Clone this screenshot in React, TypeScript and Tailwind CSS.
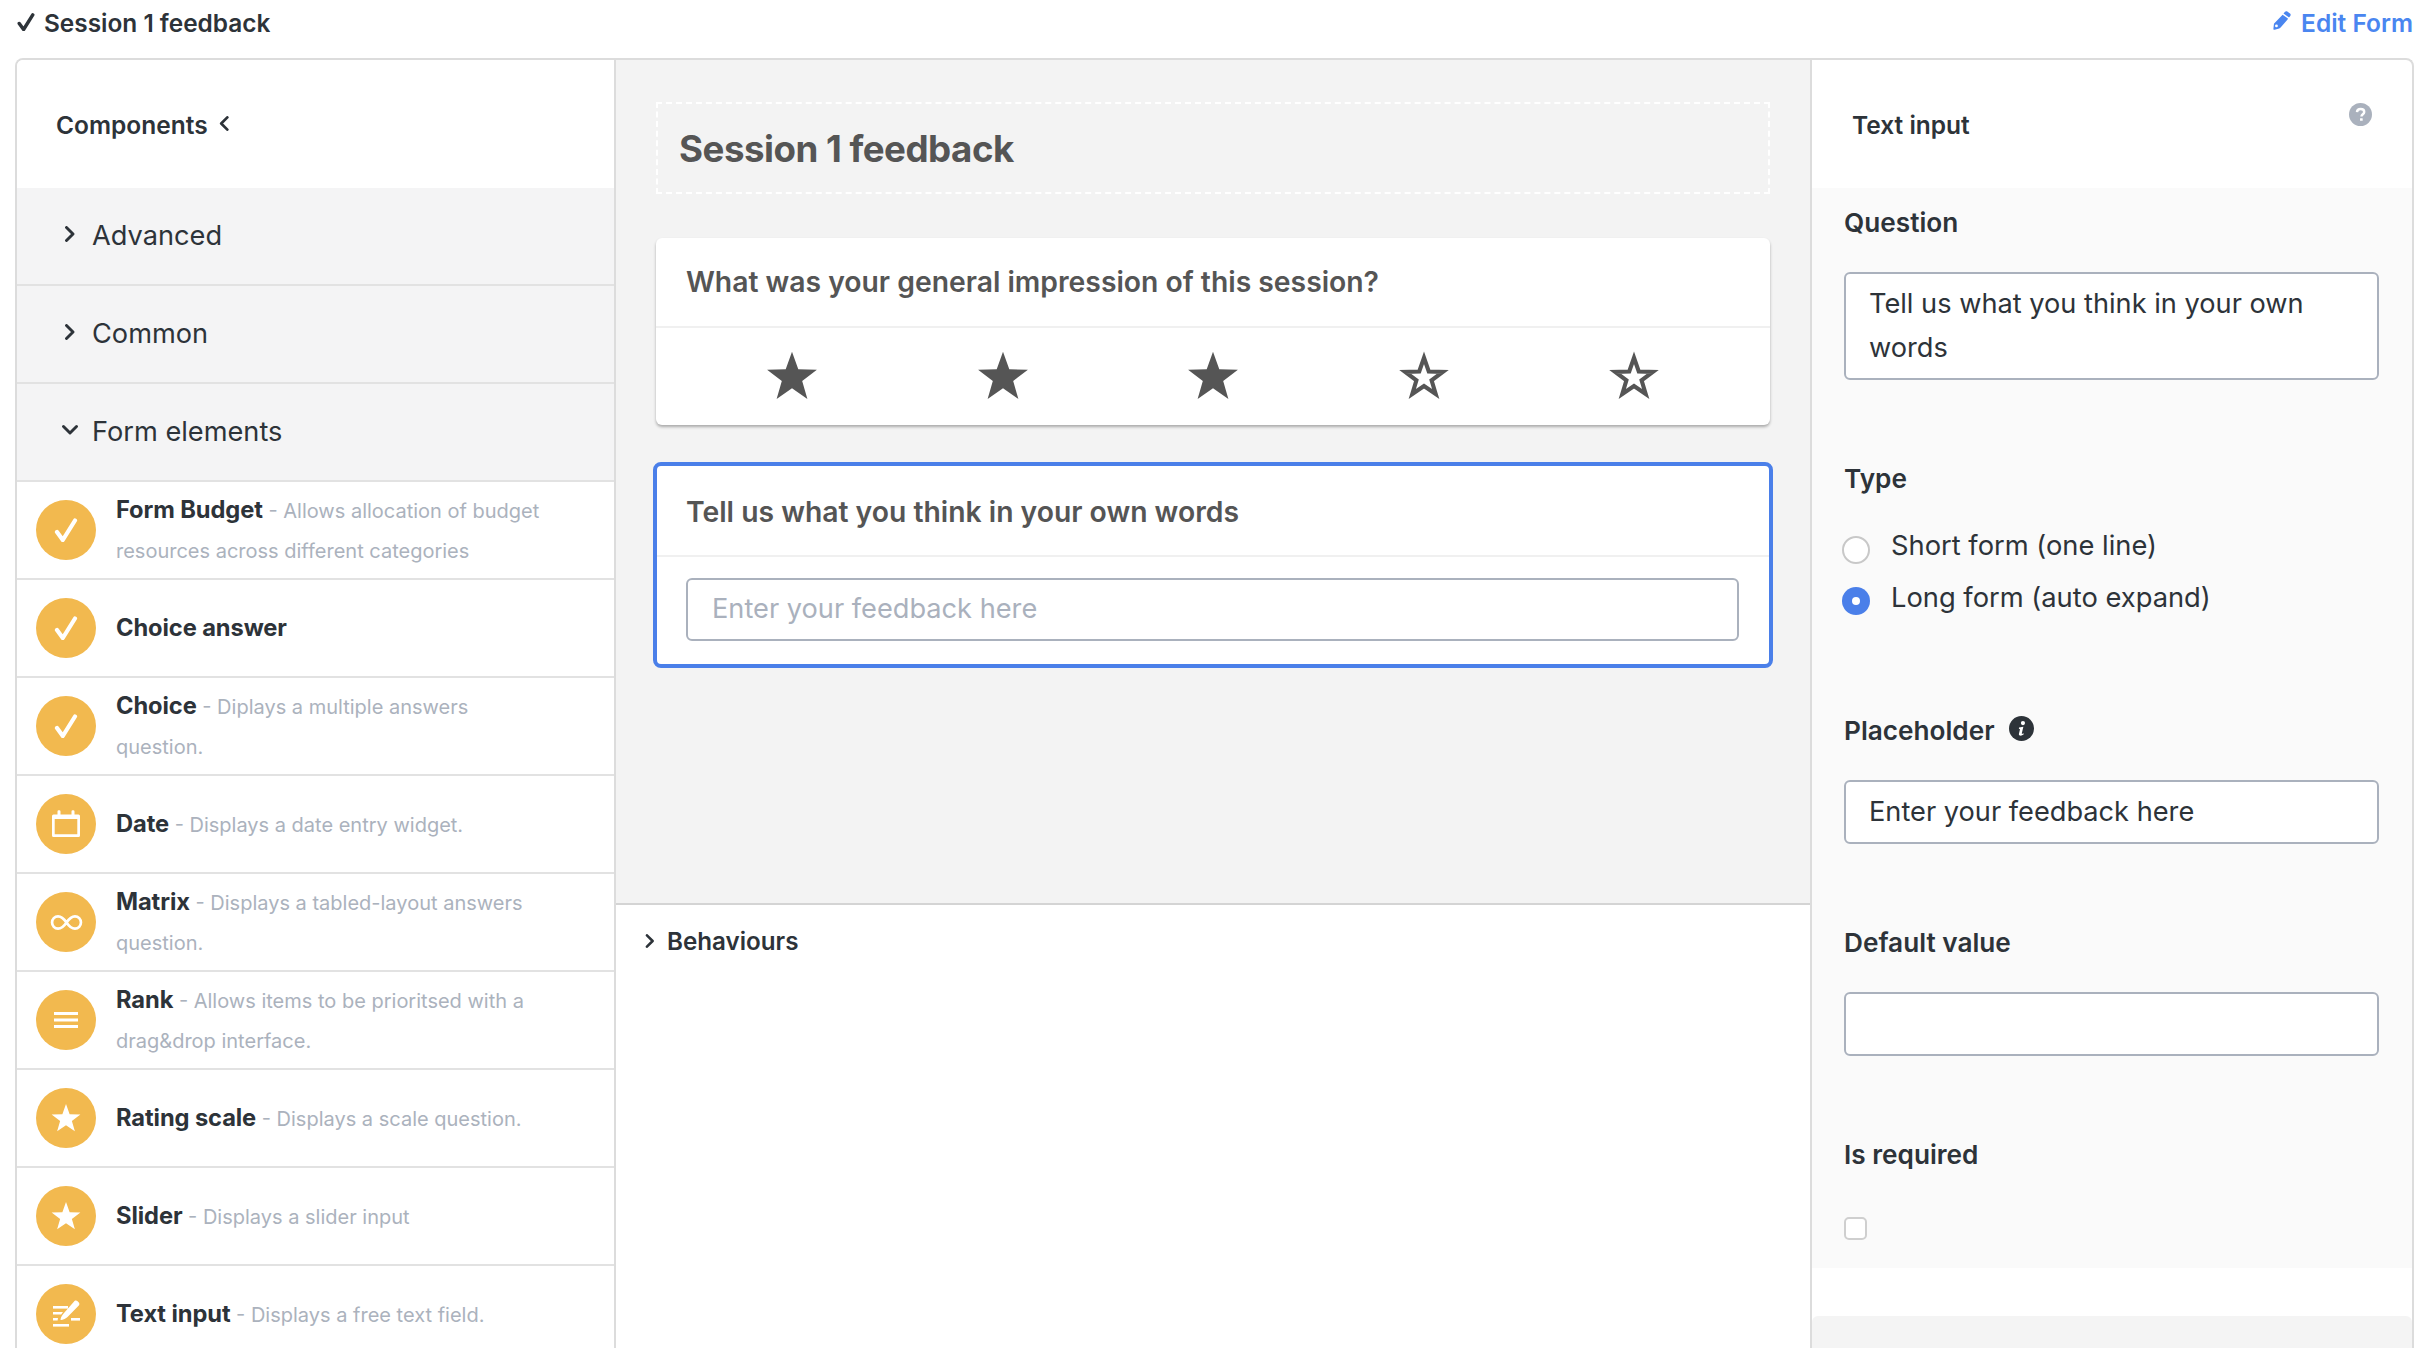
const Check = ({ className = "", sw = 4.2 }: { className?: string; sw?: number }) => (
  <svg viewBox="0 0 24 24" className={className} fill="none" stroke="currentColor" strokeWidth={sw} strokeLinecap="round" strokeLinejoin="round">
    <path d="M3 14 L8.8 22 L21 2.5" />
  </svg>
);

const Chevron = ({ dir, className = "w-[16px] h-[16px]" }: { dir: "right" | "down" | "left"; className?: string }) => {
  const d = dir === "right" ? "M4.5 1.5 L11 8 L4.5 14.5" : dir === "left" ? "M11 1.5 L4.5 8 L11 14.5" : "M1.5 4.5 L8 11 L14.5 4.5";
  return (
    <svg viewBox="0 0 16 16" className={`${className} text-[#2d3339]`} fill="none" stroke="currentColor" strokeWidth="2.9" strokeLinecap="round" strokeLinejoin="round">
      <path d={d} />
    </svg>
  );
};

const STAR = "12,0.8 14.9,8.9 23.5,9.1 16.7,14.3 19.1,22.6 12,17.7 4.9,22.6 7.3,14.3 0.5,9.1 9.1,8.9";

const StarIcon = ({ filled }: { filled: boolean }) => (
  <svg viewBox="0 0 24 24" className="w-[52px] h-[52px]">
    {filled ? (
      <polygon points={STAR} fill="#555555" />
    ) : (
      <polygon points="12,3.6 14.2,9.9 20.7,10.1 15.5,14 17.4,20.3 12,16.6 6.6,20.3 8.5,14 3.3,10.1 9.8,9.9" fill="#ffffff" stroke="#555555" strokeWidth="1.9" strokeLinejoin="miter" />
    )}
  </svg>
);

const Pencil = () => (
  <svg viewBox="0 0 18 20" className="w-[18px] h-[21px] -mt-[5px]" fill="currentColor">
    <path fillRule="evenodd" d="M12 1.2 C12.7 0.5 13.6 0.5 14.3 1 L17 3 C17.8 3.6 17.9 4.7 17.3 5.4 L16 7 L10.5 3 Z M9.6 4.2 L15.2 8.2 L7.6 17 C7.2 17.4 6.8 17.7 6.2 17.9 L1.6 19.3 C0.9 19.5 0.3 19 0.4 18.3 L0.9 13.8 C1 13.2 1.2 12.8 1.6 12.4 Z M3.4 14 A1.4 1.4 0 1 0 3.5 16.8 A1.4 1.4 0 1 0 3.4 14 Z" />
  </svg>
);

const HelpCircle = () => (
  <svg viewBox="0 0 24 24" className="absolute right-[40px] top-[43px] w-[23px] h-[23px] text-[#aab1bd]">
    <circle cx="12" cy="12" r="12" fill="currentColor" />
    <path d="M8.3 9.4 C8.5 7.4 10 6.3 12.2 6.3 C14.3 6.3 15.9 7.6 15.9 9.4 C15.9 11.7 13 11.8 13 14" fill="none" stroke="#ffffff" strokeWidth="2.5" />
    <rect x="11.5" y="15.8" width="2.8" height="2.8" rx="0.4" fill="#ffffff" />
  </svg>
);

const InfoCircle = () => (
  <svg viewBox="0 0 24 24" className="w-[25px] h-[25px] -mt-[6px] text-[#2d3339]">
    <circle cx="12" cy="12" r="12" fill="currentColor" />
    <circle cx="13.4" cy="6.8" r="2" fill="#ffffff" />
    <path d="M9.6 11 L13.8 10.2 L12.3 16.6 C12.2 17.2 12.7 17.3 13.9 16.6 L14.2 17.6 C12.8 18.7 11.3 19.1 10.2 18.7 C9.5 18.4 9.4 17.7 9.6 16.9 L10.6 12.6 L9.5 12.3 Z" fill="#ffffff" />
  </svg>
);

const icons: Record<string, React.ReactNode> = {
  check: <Check className="w-[24px] h-[24px] text-white" />,
  date: (
    <svg viewBox="0 0 32 32" className="w-[32px] h-[32px] text-white" fill="currentColor">
      <path fillRule="evenodd" d="M3 6.5 H7.5 V3.5 A1.2 1.2 0 0 1 8.7 2.3 H9.3 A1.2 1.2 0 0 1 10.5 3.5 V6.5 H21.5 V3.5 A1.2 1.2 0 0 1 22.7 2.3 H23.3 A1.2 1.2 0 0 1 24.5 3.5 V6.5 H28.5 A1.5 1.5 0 0 1 30 8 V27.5 A1.5 1.5 0 0 1 28.5 29 H3.5 A1.5 1.5 0 0 1 2 27.5 V8 A1.5 1.5 0 0 1 3.5 6.5 Z M4.7 11 V26.3 H27.3 V11 Z" />
    </svg>
  ),
  matrix: (
    <svg viewBox="0 0 32 32" className="w-[33px] h-[33px] text-white" fill="none" stroke="currentColor" strokeWidth="2.6">
      <path d="M16 16 C13 11.5 10.5 10 7.8 10 C4.5 10 2 12.8 2 16 C2 19.2 4.5 22 7.8 22 C10.5 22 13 20.5 16 16 C19 11.5 21.5 10 24.2 10 C27.5 10 30 12.8 30 16 C30 19.2 27.5 22 24.2 22 C21.5 22 19 20.5 16 16 Z" />
    </svg>
  ),
  rank: (
    <svg viewBox="0 0 24 18" className="w-[24px] h-[18px] text-white" fill="currentColor">
      <rect x="0" y="1" width="24" height="3" />
      <rect x="0" y="7.5" width="24" height="3" />
      <rect x="0" y="14" width="24" height="3" />
    </svg>
  ),
  star: (
    <svg viewBox="0 0 24 24" className="w-[30px] h-[30px] text-white" fill="currentColor">
      <polygon points={STAR} />
    </svg>
  ),
  text: (
    <svg viewBox="0 0 32 32" className="w-[32px] h-[32px] text-white" fill="currentColor">
      <rect x="3" y="8" width="15" height="2.6" />
      <path d="M3 14 H13 L11.2 16.6 H3 Z" />
      <path d="M3 20 H8 L7.6 22.6 H3 Z" />
      <rect x="3" y="26" width="16" height="2.6" />
      <rect x="21" y="20" width="9" height="2.6" />
      <path d="M24.5 3 C25.5 2.2 26.8 2.4 27.6 3.2 L28.8 4.4 C29.6 5.2 29.6 6.5 28.8 7.4 L18.5 18 C17.4 19.2 15.5 21 12.5 21.8 L11 22 C10.6 22 10.4 21.7 10.5 21.3 C11.2 18.6 12.6 16.4 14 15 Z" />
    </svg>
  ),
};

const items = [
  { icon: "check", name: "Form Budget", l1: "- Allows allocation of budget", l2: "resources across different categories" },
  { icon: "check", name: "Choice answer", l1: "", l2: "" },
  { icon: "check", name: "Choice", l1: "- Diplays a multiple answers", l2: "question." },
  { icon: "date", name: "Date", l1: "- Displays a date entry widget.", l2: "" },
  { icon: "matrix", name: "Matrix", l1: "- Displays a tabled-layout answers", l2: "question." },
  { icon: "rank", name: "Rank", l1: "- Allows items to be prioritsed with a", l2: "drag&drop interface." },
  { icon: "star", name: "Rating scale", l1: "- Displays a scale question.", l2: "" },
  { icon: "star", name: "Slider", l1: "- Displays a slider input", l2: "" },
  { icon: "text", name: "Text input", l1: "- Displays a free text field.", l2: "" },
];

const FieldLabel = ({ children, className = "" }: { children: React.ReactNode; className?: string }) => (
  <div className={`text-[26.2px] leading-[30px] font-semibold text-[#2d3339] ${className}`}>{children}</div>
);

const Field = ({ children, className = "" }: { children?: React.ReactNode; className?: string }) => (
  <div className={`border-2 border-[#aab1bd] rounded-[6px] bg-white ${className}`}>{children}</div>
);

export default function App() {
  return (
    <div className="w-[2426px] h-[1348px] overflow-hidden bg-white font-['Inter',sans-serif] text-[#2d3339]">
      <header className="h-[58px] flex items-center justify-between pl-[17px] pr-[13px] pb-[12px]">
        <div className="flex items-center gap-[9px] text-[24.4px] font-semibold">
          <Check sw={4.6} className="w-[18px] h-[18px] -mt-[2px] text-[#2d3339]" />
          <span>Session 1 feedback</span>
        </div>
        <div className="flex items-center gap-[10px] text-[24.5px] font-semibold text-[#4a86f0]">
          <Pencil />
          <span>Edit Form</span>
        </div>
      </header>

      <main className="ml-[15px] w-[2399px] h-[1290px] flex border-2 border-b-0 border-[#dcdcdc] rounded-t-[8px] overflow-hidden">
        <aside className="w-[599px] shrink-0 border-r-2 border-[#dcdcdc] bg-white">
          <div className="h-[128px] flex items-center pl-[39px] pt-[3px] text-[24.5px] font-semibold">
            <span>Components</span>
            <span className="-mt-[5px] ml-[9px]"><Chevron dir="left" className="w-[15px] h-[15px]" /></span>
          </div>
          {[
            ["Advanced", "right"],
            ["Common", "right"],
            ["Form elements", "down"],
          ].map(([label, dir]) => (
            <div key={label} className="h-[98px] flex items-center bg-[#f4f4f5] border-b-2 border-[#e2e2e2]">
              <div className="w-[75px] pl-[45px] -mt-[5px] flex">
                <Chevron dir={dir as "right" | "down"} />
              </div>
              <span className="text-[27.2px] pt-[1px] text-[#2d3339]">{label}</span>
            </div>
          ))}
          {items.map((it) => (
            <div key={it.name} className="h-[98px] flex items-center border-b-2 border-[#e2e2e2]">
              <div className="ml-[19px] w-[60px] h-[60px] rounded-full bg-[#f2b94f] flex items-center justify-center shrink-0">
                {icons[it.icon]}
              </div>
              <div className="ml-[20px] leading-[40px] whitespace-nowrap text-[20px] text-[#abb2bd]">
                <div>
                  <span className="text-[23.7px] font-bold text-[#2d3339] tracking-[-0.1px]">{it.name}</span>
                  {it.l1 && <span> {it.l1}</span>}
                </div>
                {it.l2 && <div>{it.l2}</div>}
              </div>
            </div>
          ))}
        </aside>

        <section className="flex-1 flex flex-col min-w-0 border-r-2 border-[#dcdcdc]">
          <div className="h-[845px] bg-[#f3f3f3] border-b-2 border-[#d4d4d4] pt-[42px] px-[40px]">
            <div className="h-[92px] border-2 border-dashed border-white flex items-center pl-[21px] pt-[1px] text-[36.7px] font-bold text-[#555555] tracking-[-0.5px]">
              Session 1 feedback
            </div>
            <div className="mt-[44px] bg-white rounded-[6px] h-[187px] shadow-[0_2px_3px_rgba(0,0,0,0.3)] overflow-hidden">
              <div className="h-[90px] border-b-2 border-[#f0f0f0] flex items-center pl-[30px] text-[28.3px] font-semibold text-[#555555]">
                What was your general impression of this session?
              </div>
              <div className="h-[95px] flex items-center justify-between px-[110px]">
                {[true, true, true, false, false].map((f, i) => (
                  <StarIcon key={i} filled={f} />
                ))}
              </div>
            </div>
            <div className="mt-[37px] -mx-[3px] h-[206px] border-[4px] border-[#4a7fe9] rounded-[8px] bg-white">
              <div className="h-[91px] border-b-2 border-[#f0f0f0] flex items-center pl-[29px] pt-[4px] text-[28.3px] font-semibold text-[#555555]">
                Tell us what you think in your own words
              </div>
              <div className="pt-[21px] pl-[29px] pr-[30px]">
                <div className="h-[63px] border-2 border-[#aab1bd] rounded-[6px] flex items-center pl-[24px] text-[27.2px] text-[#aab1bd]">
                  Enter your feedback here
                </div>
              </div>
            </div>
          </div>
          <div className="h-[74px] flex items-center pl-[27px] gap-[10px] text-[24.2px] font-semibold">
            <span className="-mt-[3px] flex"><Chevron dir="right" className="w-[14px] h-[14px]" /></span>
            <span>Behaviours</span>
          </div>
        </section>

        <aside className="w-[600px] shrink-0 flex flex-col">
          <div className="h-[128px] relative flex items-center pl-[40px] pt-[3px] text-[24.5px] font-semibold">
            Text input
            <HelpCircle />
          </div>
          <div className="h-[1080px] bg-[#fafafa] pl-[32px] pr-[33px] pt-[20px]">
            <FieldLabel>Question</FieldLabel>
            <Field className="mt-[34px] h-[108px] pl-[23px] pt-[8px] text-[27.2px] leading-[44px]">
              Tell us what you think in your own
              <br />
              words
            </Field>
            <FieldLabel className="mt-[84px]">Type</FieldLabel>
            <div className="mt-[30px] flex items-start gap-[21px] text-[27.3px] leading-[44px]">
              <span className="mt-[12px] w-[28px] h-[28px] -ml-[2px] rounded-full border-2 border-[#c8c8c8] bg-white shrink-0" />
              <span>Short form (one line)</span>
            </div>
            <div className="mt-[8px] flex items-start gap-[21px] text-[27.3px] leading-[44px]">
              <span className="mt-[11px] w-[28px] h-[28px] -ml-[2px] rounded-full bg-[#4a7fe9] flex items-center justify-center shrink-0">
                <span className="w-[8px] h-[8px] rounded-full bg-white" />
              </span>
              <span>Long form (auto expand)</span>
            </div>
            <div className="mt-[96px] flex items-center gap-[14px]">
              <FieldLabel>Placeholder</FieldLabel>
              <InfoCircle />
            </div>
            <Field className="mt-[34px] h-[64px] flex items-center pl-[23px] text-[27.2px]">Enter your feedback here</Field>
            <FieldLabel className="mt-[84px]">Default value</FieldLabel>
            <Field className="mt-[34px] h-[64px]" />
            <FieldLabel className="mt-[84px]">Is required</FieldLabel>
            <div className="mt-[47px] w-[23px] h-[23px] rounded-[5px] border-2 border-[#cfcfcf] bg-white" />
          </div>
          <div className="h-[48px] bg-white" />
          <div className="flex-1 bg-[#f4f4f4] rounded-t-[6px]" />
        </aside>
      </main>
    </div>
  );
}
